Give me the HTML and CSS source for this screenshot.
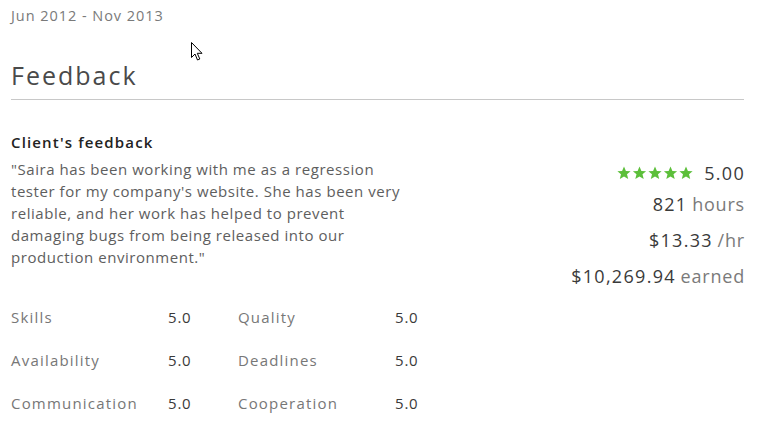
FILE: index.html
```html
<!DOCTYPE html>
<html>
<head>
<meta charset="utf-8">
<link rel="stylesheet" href="styles.css">
</head>
<body>
<div class="page">
  <div class="date">Jun 2012 - Nov 2013</div>
  <h2 class="title">Feedback</h2>
  <div class="feedback">
    <div class="left">
      <div class="subtitle">Client's feedback</div>
      <p class="quote">"Saira has been working with me as a regression tester for my company's website. She has been very reliable, and her work has helped to prevent damaging bugs from being released into our production environment."</p>
      <div class="scores">
        <span class="label">Skills</span><span class="val">5.0</span>
        <span class="label">Quality</span><span class="val">5.0</span>
        <span class="label">Availability</span><span class="val">5.0</span>
        <span class="label">Deadlines</span><span class="val">5.0</span>
        <span class="label">Communication</span><span class="val">5.0</span>
        <span class="label">Cooperation</span><span class="val">5.0</span>
      </div>
    </div>
    <div class="right">
      <div class="rating">
        <span class="stars">
          <svg viewBox="0 0 76 14" width="76" height="14">
            <g fill="#5cbf3a">
              <polygon points="7,0.5 8.9,5 13.6,5.2 10,8.3 11.2,13 7,10.4 2.8,13 4,8.3 0.4,5.2 5.1,5"/>
              <polygon transform="translate(15.5 0)" points="7,0.5 8.9,5 13.6,5.2 10,8.3 11.2,13 7,10.4 2.8,13 4,8.3 0.4,5.2 5.1,5"/>
              <polygon transform="translate(31 0)" points="7,0.5 8.9,5 13.6,5.2 10,8.3 11.2,13 7,10.4 2.8,13 4,8.3 0.4,5.2 5.1,5"/>
              <polygon transform="translate(46.5 0)" points="7,0.5 8.9,5 13.6,5.2 10,8.3 11.2,13 7,10.4 2.8,13 4,8.3 0.4,5.2 5.1,5"/>
              <polygon transform="translate(62 0)" points="7,0.5 8.9,5 13.6,5.2 10,8.3 11.2,13 7,10.4 2.8,13 4,8.3 0.4,5.2 5.1,5"/>
            </g>
          </svg>
        </span>
        <span class="num">5.00</span>
      </div>
      <div class="stat"><span class="num">821</span> <span class="unit">hours</span></div>
      <div class="stat"><span class="num">$13.33</span> <span class="unit">/hr</span></div>
      <div class="stat"><span class="num">$10,269.94</span> <span class="unit">earned</span></div>
    </div>
  </div>
</div>
<svg class="cursor" viewBox="0 0 12 19" width="12" height="19">
  <path d="M0.5,0.5 L0.5,15.5 L4,12 L6.5,18 L8.8,17 L6.3,11.3 L11,11.3 Z" fill="#fff" stroke="#000" stroke-width="1" stroke-linejoin="miter"/>
</svg>
</body>
</html>
```
FILE: styles.css
```css
html, body {
  margin: 0;
  padding: 0;
  background: #fff;
}
body {
  font-family: "Open Sans", "Liberation Sans", sans-serif;
  color: #656565;
  position: relative;
  width: 759px;
  height: 441px;
  overflow: hidden;
}
.page {
  padding: 6px 15px 0 11px;
}
.date {
  font-size: 14.5px;
  line-height: 20px;
  color: #7a7a7a;
  letter-spacing: 0.95px;
}
.title {
  margin: 0;
  margin-top: 34px;
  font-size: 25px;
  line-height: 30px;
  font-weight: 400;
  color: #4a4a4a;
  letter-spacing: 2px;
  padding-bottom: 9px;
  border-bottom: 1px solid #c8c8c8;
}
.feedback {
  display: flex;
  justify-content: space-between;
  margin-top: 32px;
}
.left {
  width: 420px;
}
.subtitle {
  font-size: 15px;
  line-height: 20px;
  font-weight: 600;
  color: #222;
  letter-spacing: 1.15px;
}
.quote {
  margin: 6px 0 0;
  font-size: 15px;
  line-height: 22px;
  color: #5e5e5e;
  letter-spacing: 0.55px;
  width: 400px;
}
.scores {
  display: grid;
  grid-template-columns: 157px 70px 157px 40px;
  row-gap: 23px;
  margin-top: 39px;
  font-size: 15px;
  line-height: 20px;
  letter-spacing: 0.5px;
}
.label {
  color: #777;
  letter-spacing: 1.2px;
}
.val {
  color: #3a3a3a;
  letter-spacing: 0.8px;
}
.right {
  display: flex;
  flex-direction: column;
  align-items: flex-end;
  padding-top: 31px;
  margin-right: -1px;
}
.rating {
  display: flex;
  align-items: center;
  gap: 11px;
  font-size: 18px;
  line-height: 20px;
}
.stars {
  display: flex;
}
.stars svg {
  display: block;
}
.num {
  color: #3a3a3a;
  letter-spacing: 1.3px;
}
.stat {
  font-size: 18px;
  line-height: 20px;
  margin-top: 16px;
}
.stat:nth-child(2) {
  margin-top: 11px;
}
.unit {
  color: #7a7a7a;
  letter-spacing: 0.8px;
}
.cursor {
  position: absolute;
  left: 191px;
  top: 42px;
}
```
